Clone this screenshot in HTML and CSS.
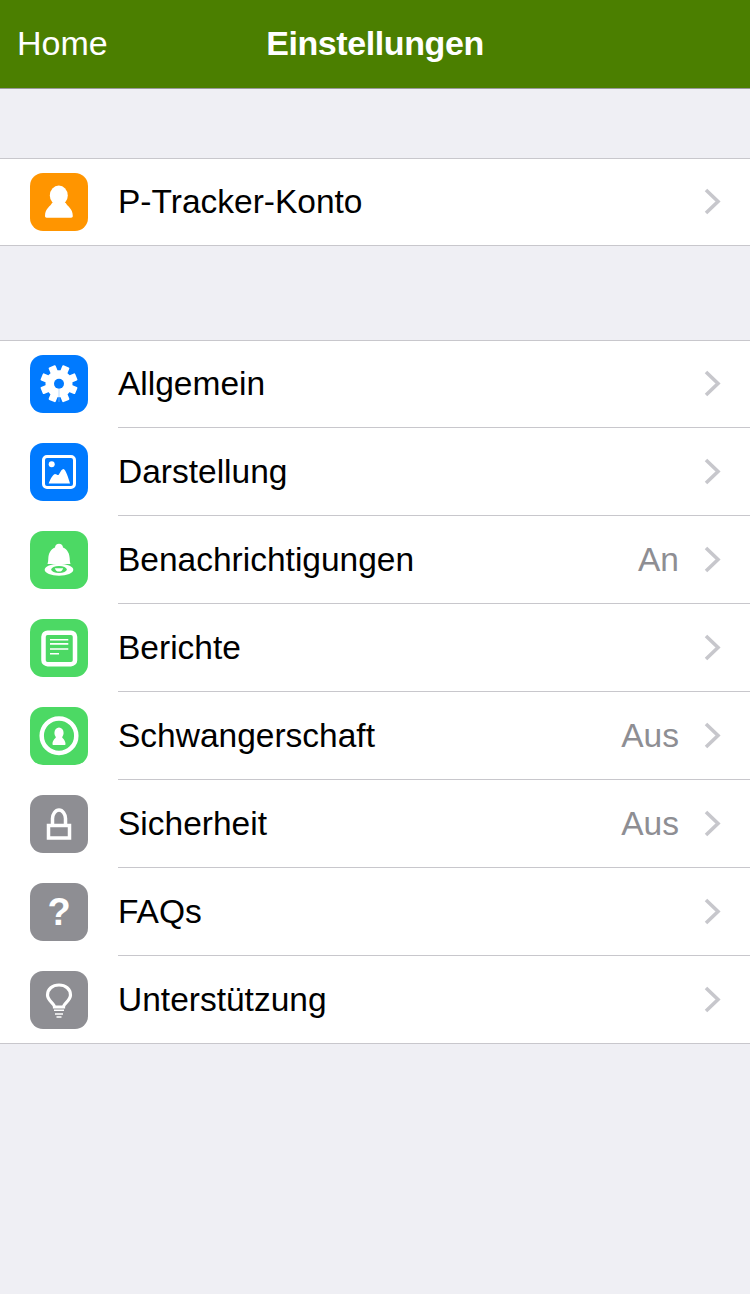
FILE: index.html
```html
<!DOCTYPE html>
<html lang="de">
<head>
<meta charset="utf-8">
<title>Einstellungen</title>
<link rel="stylesheet" href="styles.css">
</head>
<body>
<header class="nav">
  <span class="nav-back">Home</span>
  <h1 class="nav-title">Einstellungen</h1>
  <span></span>
</header>
<main>
  <section class="group group-account">
    <div class="row">
      <svg class="icon" viewBox="0 0 58 58"><rect class="orange" width="58" height="58" rx="13"/><ellipse class="w" cx="28.8" cy="22.5" rx="9" ry="10"/><path class="w" d="M22 30c-1 3-7 5-7 13 0 1 .6 1.7 1.7 1.7h24.4c1.1 0 1.7-.7 1.7-1.7 0-8-6-10-7-13z"/></svg>
      <span class="label">P-Tracker-Konto</span>
      <svg class="chev" viewBox="0 0 17 27"><path d="M2 2l12 11.500L2 25"/></svg>
    </div>
  </section>
  <section class="group group-main">
    <div class="row">
      <svg class="icon" viewBox="0 0 58 58"><rect class="blue" width="58" height="58" rx="13"/><g class="w"><g transform="rotate(22.5 29 28.700)"><rect x="25.200" y="10" width="7.600" height="37.400" rx="1"/><rect x="25.200" y="10" width="7.600" height="37.400" rx="1" transform="rotate(45 29 28.700)"/><rect x="25.200" y="10" width="7.600" height="37.400" rx="1" transform="rotate(90 29 28.700)"/><rect x="25.200" y="10" width="7.600" height="37.400" rx="1" transform="rotate(135 29 28.700)"/></g><circle cx="29" cy="28.700" r="13.500"/></g><circle class="blue" cx="29" cy="28.700" r="5"/><path class="hair" d="M29 33.700V47"/></svg>
      <span class="label">Allgemein</span>
      <svg class="chev" viewBox="0 0 17 27"><path d="M2 2l12 11.500L2 25"/></svg>
    </div>
    <div class="row">
      <svg class="icon" viewBox="0 0 58 58"><rect class="blue" width="58" height="58" rx="13"/><rect class="ring" x="13.500" y="13.500" width="31" height="31" rx="3.500" stroke-width="3"/><circle class="w" cx="21.700" cy="21.300" r="3"/><path class="w" d="M18.700 40.500c1-3 3.500-8.500 6.300-9.500 1.500 0 2.500 1.500 3.500 1 1.500-2 3-6 5-6s5 9 6.500 14.500z"/></svg>
      <span class="label">Darstellung</span>
      <svg class="chev" viewBox="0 0 17 27"><path d="M2 2l12 11.500L2 25"/></svg>
    </div>
    <div class="row">
      <svg class="icon" viewBox="0 0 58 58"><rect class="green" width="58" height="58" rx="13"/><path class="w" d="M25 16.500c0-2.200 1.800-3.800 4-3.800s4 1.600 4 3.800c4.500 2 6.500 6 6.700 11 .1 2.500.3 4 .8 5.500H17.500c.5-1.500.7-3 .8-5.500.2-5 2.200-9 6.700-11z"/><ellipse class="w" cx="29" cy="38.700" rx="14.300" ry="6"/><ellipse class="green" cx="29" cy="38.500" rx="7.800" ry="3.500"/><path class="w" d="M24.800 37.200h8.400c-.5 2-2 3.400-4.200 3.400s-3.700-1.400-4.200-3.400z"/></svg>
      <span class="label">Benachrichtigungen</span>
      <span class="value">An</span>
      <svg class="chev" viewBox="0 0 17 27"><path d="M2 2l12 11.500L2 25"/></svg>
    </div>
    <div class="row">
      <svg class="icon" viewBox="0 0 58 58"><rect class="green" width="58" height="58" rx="13"/><rect class="ring" x="13.500" y="13.700" width="31.500" height="31.500" rx="4" stroke-width="4.500"/><path class="lines" d="M20 20.700h18.300M20 24.900h18.300M20 30h18.300M20 34.700h9"/></svg>
      <span class="label">Berichte</span>
      <svg class="chev" viewBox="0 0 17 27"><path d="M2 2l12 11.500L2 25"/></svg>
    </div>
    <div class="row">
      <svg class="icon" viewBox="0 0 58 58"><rect class="green" width="58" height="58" rx="13"/><circle class="ring" cx="29" cy="28.700" r="17.300" stroke-width="4.500"/><ellipse class="w" cx="29" cy="26" rx="4.600" ry="5.500"/><path class="w" d="M26 30c-.5 1.500-3.500 3-3.500 7 0 .6.300 1 1 1h11c.7 0 1-.4 1-1 0-4-3-5.500-3.500-7z"/></svg>
      <span class="label">Schwangerschaft</span>
      <span class="value">Aus</span>
      <svg class="chev" viewBox="0 0 17 27"><path d="M2 2l12 11.500L2 25"/></svg>
    </div>
    <div class="row">
      <svg class="icon" viewBox="0 0 58 58"><rect class="gray" width="58" height="58" rx="13"/><rect class="ring" x="18.500" y="30.500" width="21" height="12.500" stroke-width="3.500"/><path class="ring" d="M22.500 30v-6.500c0-4.200 2.800-8.500 6.500-8.500s6.500 4.300 6.500 8.500V30" stroke-width="3.500"/></svg>
      <span class="label">Sicherheit</span>
      <span class="value">Aus</span>
      <svg class="chev" viewBox="0 0 17 27"><path d="M2 2l12 11.500L2 25"/></svg>
    </div>
    <div class="row">
      <svg class="icon" viewBox="0 0 58 58"><rect class="gray" width="58" height="58" rx="13"/><text class="qmark" x="29" y="42" text-anchor="middle">?</text></svg>
      <span class="label">FAQs</span>
      <svg class="chev" viewBox="0 0 17 27"><path d="M2 2l12 11.500L2 25"/></svg>
    </div>
    <div class="row">
      <svg class="icon" viewBox="0 0 58 58"><rect class="gray" width="58" height="58" rx="13"/><path class="ring" d="M24.500 36c0-4-7-6-7-12 0-6 5-10 11.500-10s11.500 4 11.500 10c0 6-7 8-7 12z" stroke-width="3.200"/><path class="lines" d="M24 39.300h10M25 43h8M26.500 46h5" /></svg>
      <span class="label">Unterstützung</span>
      <svg class="chev" viewBox="0 0 17 27"><path d="M2 2l12 11.500L2 25"/></svg>
    </div>
  </section>
</main>
</body>
</html>
```

FILE: styles.css
```css
* { box-sizing: border-box; }
html, body { margin: 0; height: 100%; }
body {
  background: #efeff4;
  font-family: "Liberation Sans", Arial, sans-serif;
  color: #000;
  overflow: hidden;
}
.nav {
  display: grid;
  grid-template-columns: 1fr auto 1fr;
  align-items: center;
  height: 89px;
  padding: 0 17px 2px;
  background: #4b7f00;
  border-bottom: 1px solid #9a9a9a;
  color: #fff;
}
.nav-back { font-size: 34px; }
.nav-title { margin: 0; font-size: 34px; font-weight: 700; letter-spacing: -.4px; }
.group { background: #fff; }
.group-account { margin-top: 69px; }
.group-main { margin-top: 94px; }
.row {
  position: relative;
  display: flex;
  align-items: center;
  height: 88px;
  padding: 0 29px 1px 30px;
}
.row::after {
  content: "";
  position: absolute;
  left: 118px;
  right: 0;
  bottom: 0;
  height: 1px;
  background: #c8c7cc;
}
.row:last-child::after { left: 0; }
.row:first-child::before {
  content: "";
  position: absolute;
  left: 0;
  right: 0;
  top: 0;
  height: 1px;
  background: #c8c7cc;
}
.icon { flex: none; width: 58px; height: 58px; margin-right: 30px; }
.label { flex: 1; font-size: 33.500px; }
.value { font-size: 33.500px; color: #8e8e93; margin-right: 25px; }
.chev { flex: none; width: 17px; height: 27px; }
.chev path { fill: none; stroke: #c7c7cc; stroke-width: 3.600; }
.orange { fill: #ff9500; }
.blue { fill: #007aff; }
.green { fill: #4cd964; }
.gray { fill: #8e8e93; }
.w { fill: #fff; }
.ring { fill: none; stroke: #fff; }
.lines { fill: none; stroke: #fff; stroke-width: 1.600; }
.hair { fill: none; stroke: #8fc2ff; stroke-width: .6; }
.qmark { fill: #fff; font-size: 38px; font-weight: 700; font-family: "Liberation Sans", Arial, sans-serif; }
```
